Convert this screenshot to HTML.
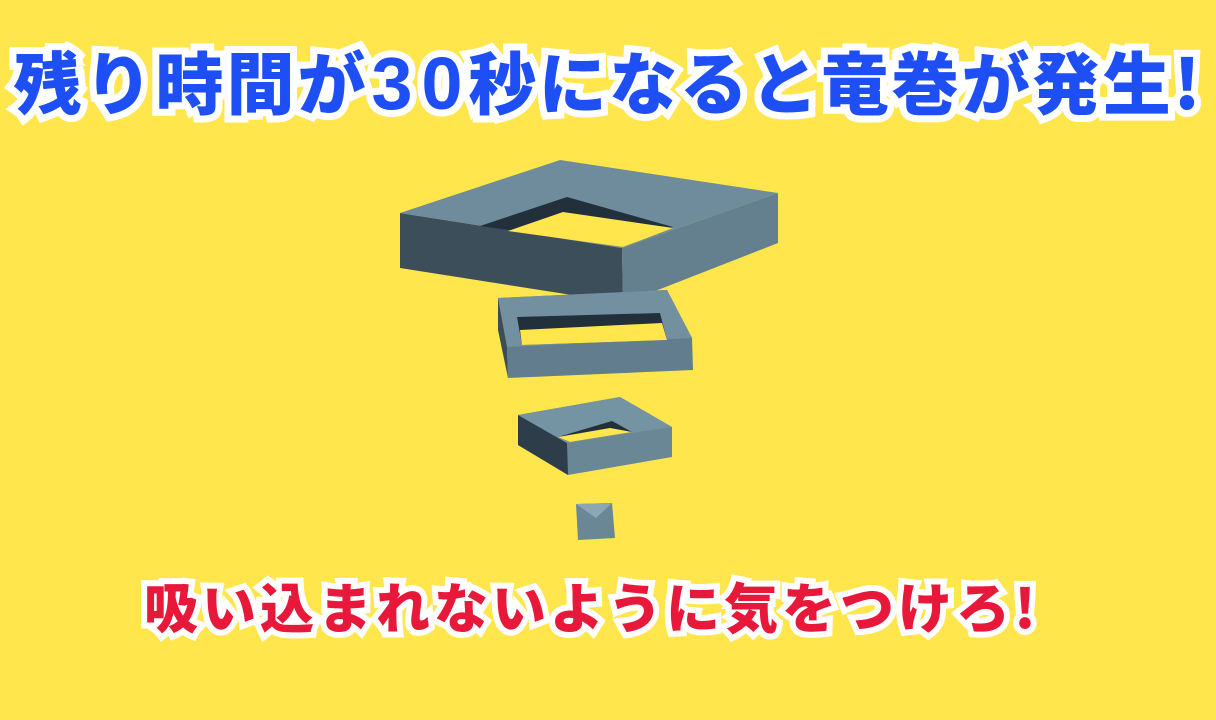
<!DOCTYPE html>
<html><head><meta charset="utf-8"><style>
html,body{margin:0;padding:0}
body{width:1216px;height:720px;background:#FFE64C;position:relative;overflow:hidden}
.t{position:absolute;white-space:nowrap;font-family:"Noto Sans CJK JP",sans-serif;font-weight:900;paint-order:stroke fill;-webkit-text-stroke-color:#fff;stroke-linejoin:round}
.t span{display:inline-block;text-align:center;overflow:visible}
#t1{left:12px;top:40px;font-size:68px;line-height:80px;color:#1D4FF5;-webkit-text-stroke-width:14px}
#t1 span{width:71px}
#t1 span.n{width:50px;font-family:"Liberation Sans",sans-serif;font-size:74px}
#t1 span.m{width:70.5px}
#t1 span.e{width:30px}
#t2{left:142px;top:572px;font-size:54px;line-height:66px;color:#E8183A;-webkit-text-stroke-width:12px}
#t2 span{width:58px}
#t2 span.e{width:26px}
svg{position:absolute;left:0;top:0}
</style></head><body>
<svg width="1216" height="720">
<polygon points="400,213 622,248 623,303 400,268" fill="#3D4E5B"/>
<polygon points="622,248 778,193 778,243 663,288 623,303" fill="#647F8E"/>
<polygon points="400,213 560,160 778,193 622,248" fill="#6E8C9B"/>
<polygon points="480,226 567,197 673,227 623,247" fill="#22303C"/>
<polygon points="508,231 563,212 673,228 623,247" fill="#FFE64C"/>
<polygon points="498,298 667,290 692,338 693,370 508,378 507,347" fill="#627D8D"/>
<polygon points="498,298 667,290 692,338 507,347" fill="#7390A0"/>
<polygon points="498,298 507,347 508,378 498,330" fill="#3B4D5A"/>
<polygon points="517,317 660,313 667,340 522,345" fill="#22303C"/>
<polygon points="520,330 662,323 667,340 522,345" fill="#FFE64C"/>
<polygon points="518,415 620,397 672,427 672,457 568,475 518,445" fill="#6A8796"/>
<polygon points="518,415 567,443 568,475 518,445" fill="#2D3D4A"/>
<polygon points="518,415 620,397 672,427 567,443" fill="#7493A3"/>
<polygon points="558,437 612,421 632,432 570,442" fill="#22303C"/>
<polygon points="558,437 610,428 632,432 570,442" fill="#FFE64C"/>
<polygon points="576,504 612,503 615,538 578,540" fill="#6A8796"/>
<polygon points="576,504 612,503 596,518" fill="#8CA6B4"/>
</svg>
<div class="t" id="t1"><span>残</span><span>り</span><span>時</span><span>間</span><span>が</span><span class="n">3</span><span class="n">0</span><span class="m">秒</span><span class="m">に</span><span class="m">な</span><span class="m">る</span><span class="m">と</span><span class="m">竜</span><span class="m">巻</span><span class="m">が</span><span class="m">発</span><span class="m">生</span><span class="e">!</span></div>
<div class="t" id="t2"><span>吸</span><span>い</span><span>込</span><span>ま</span><span>れ</span><span>な</span><span>い</span><span>よ</span><span>う</span><span>に</span><span>気</span><span>を</span><span>つ</span><span>け</span><span>ろ</span><span class="e">!</span></div>
</body></html>
